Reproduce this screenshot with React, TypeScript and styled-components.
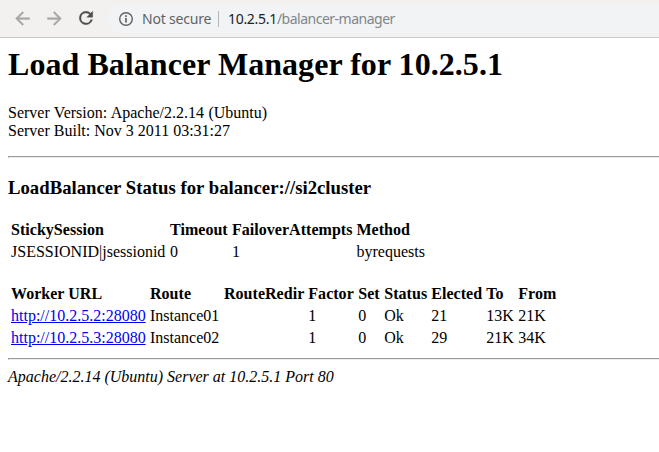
import React from "react";
import styled, { createGlobalStyle } from "styled-components";

const GlobalStyle = createGlobalStyle`
  html, body { margin: 0; padding: 0; background: #fff; overflow: hidden; }
`;

const Window = styled.div`
  height: 452px;
  overflow: hidden;
  background: #fff;
`;

const Toolbar = styled.header`
  box-sizing: border-box;
  display: flex;
  align-items: flex-start;
  height: 38px;
  padding: 5px 0 0 10px;
  background: #f2f1f0;
  border-bottom: 1px solid #cbc9c8;
`;

const NavButton = styled.button<{ $enabled?: boolean }>`
  display: flex;
  align-items: center;
  justify-content: center;
  width: 24px;
  height: 26px;
  margin: 0 8px 0 0;
  padding: 0;
  border: 0;
  background: none;
  color: ${(p) => (p.$enabled ? "#4d4c4b" : "#a9a8a7")};
`;

const AddressBar = styled.div`
  display: flex;
  align-items: center;
  flex: 1;
  box-sizing: border-box;
  height: 28px;
  margin-left: 2px;
  padding-left: 8px;
  border-radius: 14px 0 0 14px;
  background: #f1f3f4;
  color: #5f6368;
  font-family: "Noto Sans", sans-serif;
  font-size: 14px;
  line-height: 20px;
  white-space: nowrap;
`;

const SecurityLabel = styled.span`
  width: 69px;
  margin-left: 6px;
  letter-spacing: -0.2px;
`;

const Separator = styled.span`
  width: 1px;
  height: 16px;
  margin: 0 9px 0 7px;
  background: #b4b7ba;
`;

const Url = styled.span`
  color: #80868b;
  letter-spacing: -0.5px;
`;

const Host = styled.span`
  color: #202124;
  letter-spacing: -0.3px;
`;

const Page = styled.main`
  padding: 8px 0 0 8px;
  color: #000;
  font-family: "Liberation Serif", serif;
  font-size: 16px;
  line-height: 18px;
`;

const Title = styled.h1`
  margin: 0 0 21px;
  font-size: 32px;
  line-height: 37px;
  letter-spacing: 0.05px;
`;

const ServerInfo = styled.dl`
  margin: 0 0 16px;
`;

const InfoLine = styled.dt<{ $wordGap?: number }>`
  word-spacing: ${(p) => p.$wordGap ?? 0}px;
`;

const Rule = styled.hr`
  height: 0;
  margin: 0;
  border: 1px solid;
  border-color: #9a9a9a #eee #eee #9a9a9a;
  border-right: 0;
`;

const ClusterTitle = styled.h3`
  margin: 19px 0 20px;
  font-size: 18.72px;
  line-height: 21px;
  letter-spacing: 0.015px;
`;

const Table = styled.table`
  margin-bottom: 18px;
  border-spacing: 2px;
  font-size: 16px;
  &:last-of-type { margin-bottom: 8px; }
  th, td { height: 18px; padding: 1px; text-align: left; white-space: nowrap; }
  th { letter-spacing: 0.03px; }
`;

const Column = styled.col<{ $width: number }>`
  width: ${(p) => p.$width}px;
`;

const WorkerLink = styled.a`
  color: #0000ee;
  text-decoration: underline;
`;

const Signature = styled.address`
  margin-top: 8px;
  font-style: italic;
`;

type ColumnSpec = { label: string; width: number };

const settingColumns: ColumnSpec[] = [
  { label: "StickySession", width: 157 },
  { label: "Timeout", width: 60 },
  { label: "FailoverAttempts", width: 122 },
  { label: "Method", width: 71 },
];
const settings = ["JSESSIONID|jsessionid", "0", "1", "byrequests"];

const workerColumns: ColumnSpec[] = [
  { label: "Worker URL", width: 137 },
  { label: "Route", width: 72 },
  { label: "RouteRedir", width: 82 },
  { label: "Factor", width: 48 },
  { label: "Set", width: 24 },
  { label: "Status", width: 45 },
  { label: "Elected", width: 53 },
  { label: "To", width: 30 },
  { label: "From", width: 40 },
];
const workers = [
  ["http://10.2.5.2:28080", "Instance01", "", "1", "0", "Ok", "21", "13K", "21K"],
  ["http://10.2.5.3:28080", "Instance02", "", "1", "0", "Ok", "29", "21K", "34K"],
];

function TableHead({ columns }: { columns: ColumnSpec[] }) {
  return (
    <>
      <colgroup>{columns.map((c) => <Column key={c.label} $width={c.width} />)}</colgroup>
      <thead><tr>{columns.map((c) => <th key={c.label}>{c.label}</th>)}</tr></thead>
    </>
  );
}

export default function App() {
  return (
    <Window>
      <GlobalStyle />
      <Toolbar>
        <NavButton aria-label="Back">
          <svg width="21" height="21" viewBox="0 0 24 24" fill="currentColor" stroke="currentColor" strokeWidth="0.5"><path d="M20 11H7.83l5.59-5.59L12 4l-8 8 8 8 1.41-1.41L7.83 13H20v-2z" /></svg>
        </NavButton>
        <NavButton aria-label="Forward">
          <svg width="21" height="21" viewBox="0 0 24 24" fill="currentColor" stroke="currentColor" strokeWidth="0.5"><path d="M12 4l-1.41 1.41L16.17 11H4v2h12.17l-5.58 5.59L12 20l8-8z" /></svg>
        </NavButton>
        <NavButton aria-label="Reload" $enabled>
          <svg width="20" height="20" viewBox="0 0 24 24" fill="currentColor" stroke="currentColor" strokeWidth="0.5"><path d="M17.65 6.35A7.958 7.958 0 0 0 12 4a8 8 0 1 0 7.73 10h-2.08A6 6 0 1 1 12 6c1.66 0 3.14.69 4.22 1.78L13 11h7V4l-2.35 2.35z" /></svg>
        </NavButton>
        <AddressBar>
          <svg width="20" height="20" viewBox="0 0 20 20" fill="none" stroke="currentColor">
            <circle cx="10" cy="10" r="6.3" strokeWidth="1.4" />
            <path d="M10 9v4.4M10 6.3v1.7" strokeWidth="1.7" />
          </svg>
          <SecurityLabel>Not secure</SecurityLabel>
          <Separator />
          <Url><Host>10.2.5.1</Host>/balancer-manager</Url>
        </AddressBar>
      </Toolbar>
      <Page>
        <Title>Load Balancer Manager for 10.2.5.1</Title>
        <ServerInfo>
          <InfoLine $wordGap={0.4}>Server Version: Apache/2.2.14 (Ubuntu)</InfoLine>
          <InfoLine>Server Built: Nov 3 2011 03:31:27</InfoLine>
        </ServerInfo>
        <Rule />
        <ClusterTitle>LoadBalancer Status for balancer://si2cluster</ClusterTitle>
        <Table>
          <TableHead columns={settingColumns} />
          <tbody><tr>{settings.map((value, i) => <td key={i}>{value}</td>)}</tr></tbody>
        </Table>
        <Table>
          <TableHead columns={workerColumns} />
          <tbody>
            {workers.map(([url, ...cells]) => (
              <tr key={url}>
                <td><WorkerLink href={url}>{url}</WorkerLink></td>
                {cells.map((value, i) => <td key={i}>{value}</td>)}
              </tr>
            ))}
          </tbody>
        </Table>
        <Rule />
        <Signature>Apache/2.2.14 (Ubuntu) Server at 10.2.5.1 Port 80</Signature>
      </Page>
    </Window>
  );
}
